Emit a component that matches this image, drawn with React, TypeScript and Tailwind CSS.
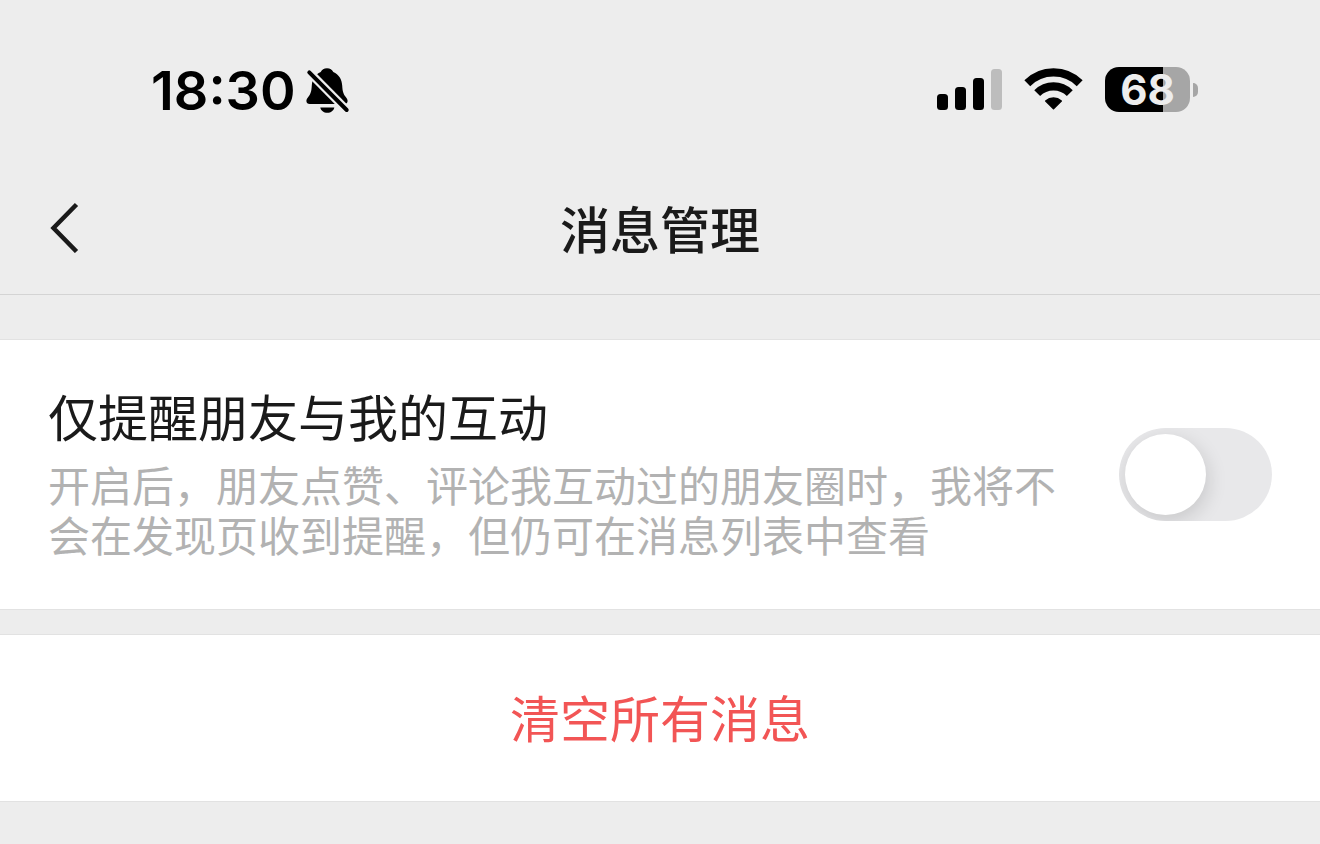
import { useState } from "react";

function BellOffIcon() {
  return (
    <svg className="h-12 w-12" viewBox="0 0 48 48" aria-label="静音" role="img">
      <path
        d="M22 1.200c-3 0-5.200 1.400-6.300 3.700C10.200 7.300 7.200 12 6.800 18.500 6.500 24.500 5.600 27 3.400 29.700 2 31.400 1.400 32.600 1.400 34c0 1.900 1.300 3 3.300 3h34.600c2 0 3.300-1.100 3.300-3 0-1.400-.6-2.600-2-4.300-2.200-2.700-3.100-5.200-3.400-11.200C36.800 12 33.800 7.300 28.300 4.900 27.200 2.600 25 1.200 22 1.200Z"
        fill="black"
      />
      <path d="M15.300 40.500h14c-.6 3.200-3.400 5.300-7 5.300s-6.400-2.100-7-5.300Z" fill="black" />
      <path d="M4.300 5.300 41.700 43" stroke="#ededed" strokeWidth="8.500" />
      <path d="M4.300 5.300 41.700 43" stroke="black" strokeWidth="4" strokeLinecap="round" />
    </svg>
  );
}

function SignalIcon() {
  return (
    <svg className="h-[42px] w-[66px]" viewBox="0 0 66 42" aria-label="信号" role="img">
      <rect x="0" y="25" width="11" height="16" rx="3.500" />
      <rect x="18" y="18" width="11" height="23" rx="3.500" />
      <rect x="36" y="9" width="11" height="32" rx="3.500" />
      <rect x="54" y="0" width="11" height="41" rx="3.500" fill="#bdbdbd" />
    </svg>
  );
}

function WifiIcon() {
  return (
    <svg
      className="h-[42px] w-[58px] overflow-visible"
      viewBox="0 0 58 42"
      aria-label="Wi-Fi"
      role="img"
    >
      <g fill="none" stroke="black" strokeWidth="8.300">
        <path d="M2.300 14.200A37 37 0 0 1 54.700 14.200" />
        <path d="M12.200 24.100A23 23 0 0 1 44.800 24.100" />
      </g>
      <path
        d="M28.500 39.700 20.700 32A12 12 0 0 1 36.300 32Z"
        stroke="black"
        strokeWidth="1.500"
        strokeLinejoin="round"
      />
    </svg>
  );
}

function Battery({ level }: { level: number }) {
  return (
    <div className="flex items-center gap-[3px]">
      <div
        className="flex h-[45px] w-[85px] items-center justify-center rounded-[14px] text-[42px] leading-[45px] font-bold text-[#ededed]"
        style={{ background: `linear-gradient(to right, #000 ${level}%, #a6a6a6 ${level}%)` }}
      >
        {level}
      </div>
      <div className="h-[14px] w-[5px] rounded-r-full bg-[#a6a6a6]" />
    </div>
  );
}

function StatusBar() {
  return (
    <div className="flex h-[164px] items-center justify-between pt-4 pr-[122px] pl-[151px] font-['Inter',sans-serif]">
      <div className="flex items-center gap-[9px] pt-[2px]">
        <time className="text-[54px] leading-none font-semibold text-black">18:30</time>
        <BellOffIcon />
      </div>
      <div className="flex items-center gap-[22px] pb-px">
        <SignalIcon />
        <WifiIcon />
        <Battery level={68} />
      </div>
    </div>
  );
}

export default function App() {
  const [friendsOnly, setFriendsOnly] = useState(false);

  return (
    <div
      lang="zh-CN"
      className="min-h-screen bg-[#ededed] font-['Noto_Sans_CJK_SC',sans-serif] text-[#1a1a1a]"
    >
      <header className="border-b border-[#d4d4d4]">
        <StatusBar />
        <div className="grid h-[130px] grid-cols-[1fr_auto_1fr] items-center px-12 pb-1">
          <button type="button" aria-label="返回" className="justify-self-start">
            <svg className="h-[52px] w-8" viewBox="0 0 32 52" fill="none">
              <path d="M28.500 3.500 5.500 27 28.500 50.500" stroke="#1a1a1a" strokeWidth="4.500" />
            </svg>
          </button>
          <h1 className="text-[50px] leading-[60px] font-medium">消息管理</h1>
        </div>
      </header>

      <main className="flex flex-col gap-6 pt-11">
        <section className="flex items-center gap-14 border-y border-[#e2e2e2] bg-white px-12">
          <div className="flex-1 pt-[45px] pb-[50px]">
            <label htmlFor="friends-only" className="block text-[50px] leading-[60px]">
              仅提醒朋友与我的互动
            </label>
            <p id="friends-only-hint" className="mt-[14px] text-[42px] leading-[50px] text-[#b2b2b2]">
              开启后，朋友点赞、评论我互动过的朋友圈时，我将不会在发现页收到提醒，但仍可在消息列表中查看
            </p>
          </div>
          <input
            id="friends-only"
            type="checkbox"
            role="switch"
            aria-describedby="friends-only-hint"
            checked={friendsOnly}
            onChange={(e) => setFriendsOnly(e.target.checked)}
            className="flex h-[93px] w-[153px] shrink-0 appearance-none items-center overflow-hidden rounded-full bg-[#e8e8ea] px-[6px] before:size-[81px] before:rounded-full before:bg-white before:shadow-[2px_6px_20px_rgba(0,0,0,0.14)] checked:justify-end checked:bg-[#07c160]"
          />
        </section>

        <section className="border-y border-[#e2e2e2] bg-white">
          <button type="button" className="h-[166px] w-full pb-1 text-[50px] text-[#f25555]">
            清空所有消息
          </button>
        </section>
      </main>
    </div>
  );
}
